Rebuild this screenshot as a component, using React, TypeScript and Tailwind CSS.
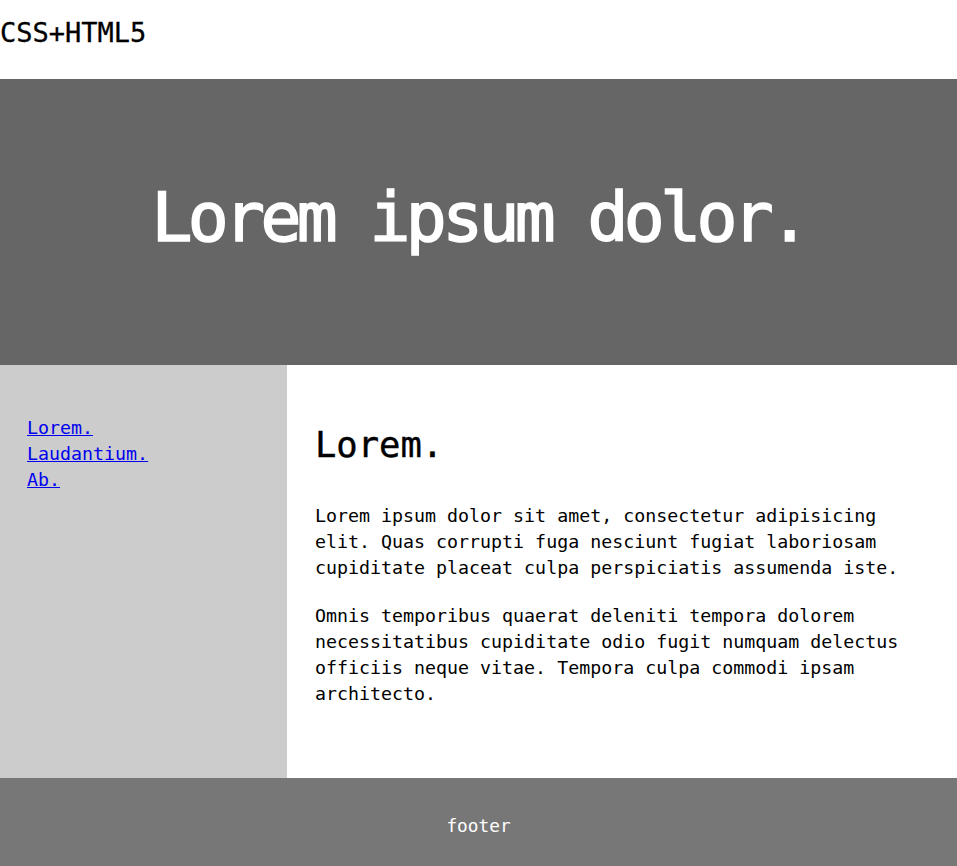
const mono = "font-['DejaVu_Sans_Mono',monospace]";

export default function App() {
  return (
    <div className={`${mono} min-h-[866px] flex flex-col text-black`}>
      {/* Header */}
      <header className="h-[79px] bg-white flex items-center">
        <h1 className="text-[27px] leading-none pb-[14px] [-webkit-text-stroke:0.3px_black]">CSS+HTML5</h1>
      </header>

      {/* Hero */}
      <section className="h-[286px] bg-[#666666] flex items-center justify-center">
        <h2 className="text-white text-[68px] tracking-[-4.6px] leading-none pb-[8px] [-webkit-text-stroke:1.6px_white]">
          Lorem ipsum dolor.
        </h2>
      </section>

      {/* Middle */}
      <div className="flex h-[413px]">
        <aside className="w-[287px] bg-[#cccccc] px-[27px]">
          <nav className="flex flex-col pt-[50px] text-[18.3px] leading-[26px]">
            <a href="#" className="text-[#0000ee] underline self-start">Lorem.</a>
            <a href="#" className="text-[#0000ee] underline self-start">Laudantium.</a>
            <a href="#" className="text-[#0000ee] underline self-start">Ab.</a>
          </nav>
        </aside>
        <main className="flex-1 bg-white px-[28px] pt-[58px]">
          <h3 className="text-[35.5px] leading-[44px] mb-[36px] [-webkit-text-stroke:0.4px_black]">Lorem.</h3>
          <p className="text-[18.3px] leading-[26px] mb-[22px]">
            Lorem ipsum dolor sit amet, consectetur adipisicing elit. Quas corrupti fuga nesciunt fugiat laboriosam cupiditate placeat culpa perspiciatis assumenda iste.
          </p>
          <p className="text-[18.3px] leading-[26px]">
            Omnis temporibus quaerat deleniti tempora dolorem necessitatibus cupiditate odio fugit numquam delectus officiis neque vitae. Tempora culpa commodi ipsam architecto.
          </p>
        </main>
      </div>

      {/* Footer */}
      <footer className="h-[88px] bg-[#777777] flex items-center justify-center">
        <span className="text-white text-[17.8px] leading-none pt-[8px]">footer</span>
      </footer>
    </div>
  );
}
